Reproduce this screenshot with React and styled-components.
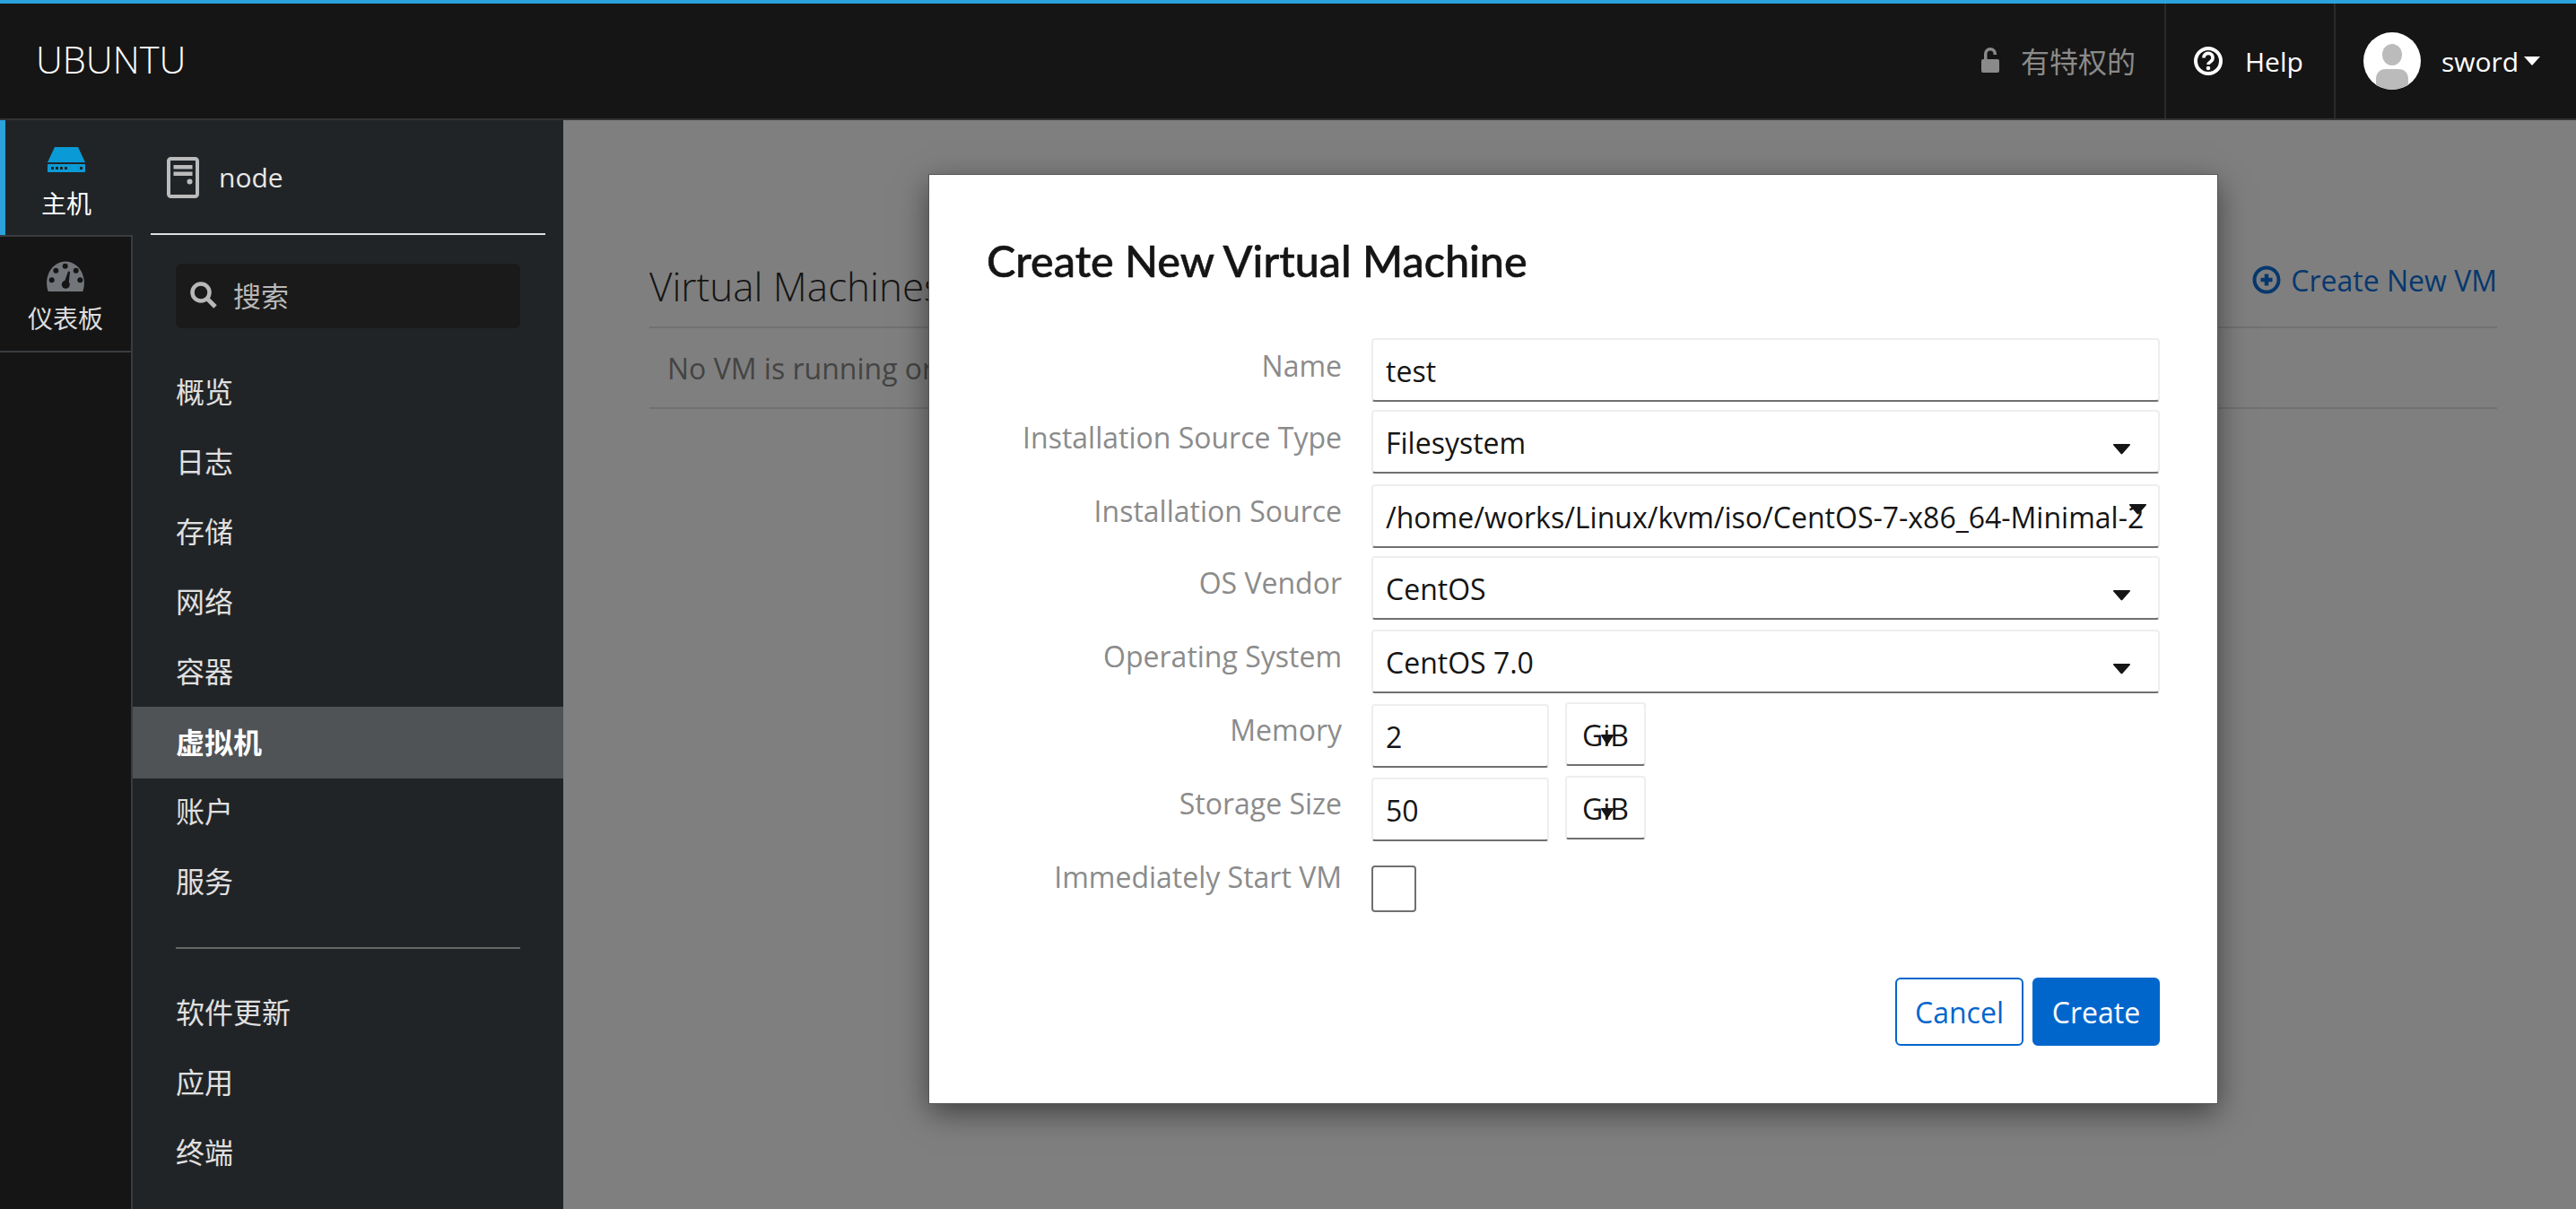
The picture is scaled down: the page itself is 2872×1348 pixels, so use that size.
import React from 'react';
import styled, { createGlobalStyle } from 'styled-components';

const Global = createGlobalStyle`
  html, body {
    margin: 0;
    padding: 0;
    background: #7f7f7f;
  }
  * {
    box-sizing: border-box;
  }
  body {
    font-family: "Open Sans", "Noto Sans CJK SC", sans-serif;
  }
`;

const Page = styled.div`
  width: 2872px;
  height: 1348px;
  overflow: hidden;
  display: flex;
  flex-direction: column;
`;

const TopBar = styled.header`
  height: 134px;
  flex: none;
  display: flex;
  align-items: stretch;
  background: #151515;
  border-top: 4px solid #2ba2dc;
  border-bottom: 2px solid #333;
`;

const Brand = styled.div`
  flex: 1;
  padding: 0 0 4px 40px;
  display: flex;
  align-items: center;
  font-size: 41.500px;
  font-weight: 300;
  color: #fff;
`;

const Privileges = styled.div`
  width: 274px;
  display: flex;
  align-items: center;
  gap: 24px;
  padding: 0 0 3px 70px;
  font-size: 32px;
  color: #8a8a8a;
`;

const BarItem = styled.div`
  width: ${(p) => p.$width}px;
  display: flex;
  align-items: center;
  padding-left: ${(p) => p.$pad}px;
  font-size: 30px;
  color: #fff;
  border-left: 2px solid #2a2a2a;
`;

const HelpLabel = styled.span`
  margin-left: 25px;
`;

const UserLabel = styled.span`
  margin-left: 23px;
`;

const UserCaret = styled.svg`
  margin-left: 6px;
  width: 18px;
  height: 10px;
  fill: #fff;
`;

const Avatar = styled.svg`
  width: 64px;
  height: 64px;
  border-radius: 50%;
  flex: none;
`;

const Main = styled.div`
  flex: 1;
  display: flex;
  min-height: 0;
`;

const Rail = styled.nav`
  width: 148px;
  flex: none;
  background: #151515;
  border-right: 2px solid #393c3f;
`;

const RailItem = styled.div`
  height: ${(p) => p.$height}px;
  width: ${(p) => (p.$active ? '148px' : 'auto')};
  position: relative;
  z-index: 1;
  display: flex;
  flex-direction: column;
  align-items: center;
  padding-top: ${(p) => p.$top}px;
  font-size: 28px;
  color: ${(p) => (p.$active ? '#fff' : '#ddd')};
  background: ${(p) => (p.$active ? '#212427' : '#151515')};
  border-left: ${(p) => (p.$active ? '6px solid #2ba2dc' : '0')};
  padding-right: ${(p) => (p.$active ? '6px' : '0')};
  border-bottom: ${(p) => (p.$active ? '0' : '2px solid #393c3f')};
  border-top: ${(p) => (p.$active ? '0' : '2px solid #393c3f')};
`;

const RailIcon = styled.svg`
  width: 42px;
  height: ${(p) => p.$height}px;
  margin-bottom: ${(p) => p.$gap}px;
  flex: none;
`;

const RailLabel = styled.span`
  line-height: 32px;
`;

const Nav = styled.aside`
  width: 480px;
  flex: none;
  background: #212427;
  display: flex;
  flex-direction: column;
`;

const NodeHeader = styled.div`
  height: 128px;
  margin: 0 20px;
  padding: 39px 0 0 18px;
  display: flex;
  align-items: flex-start;
  gap: 22px;
  border-bottom: 2px solid #ddd;
  font-size: 30px;
  color: #e8e8e8;
`;

const NodeIcon = styled.svg`
  width: 36px;
  height: 46px;
  margin-top: 2px;
  flex: none;
`;

const NodeName = styled.span`
  line-height: 44px;
  margin-top: 3px;
`;

const SearchBox = styled.div`
  margin: 32px 48px 30px;
  height: 72px;
  padding: 0 0 3px 16px;
  background: #1a1a1a;
  border-radius: 6px;
  display: flex;
  align-items: center;
  gap: 18px;
  font-size: 31px;
  color: #b8b8b8;
`;

const NavItem = styled.div`
  height: ${(p) => (p.$active ? 80 : 78)}px;
  margin: ${(p) => (p.$active ? '1.500px 0 -3.500px' : '0')};
  padding: 0 0 ${(p) => (p.$active ? 3 : 0)}px 48px;
  display: flex;
  align-items: center;
  flex: none;
  font-size: 32px;
  font-weight: ${(p) => (p.$active ? 700 : 400)};
  color: ${(p) => (p.$active ? '#fff' : '#e0e0e0')};
  background: ${(p) => (p.$active ? '#505356' : 'transparent')};
`;

const NavDivider = styled.div`
  height: 2px;
  flex: none;
  margin: 35.500px 48px 30.500px;
  background: #666;
`;

const Content = styled.main`
  flex: 1;
  position: relative;
  min-width: 0;
  background: #7f7f7f;
  padding: 0 88px 0 96px;
`;

const TitleRow = styled.div`
  margin-top: 150px;
  height: 82px;
  display: flex;
  justify-content: space-between;
  border-bottom: 2px solid #717171;
  overflow: hidden;
`;

const PageTitle = styled.h1`
  margin: 0;
  padding-top: 5px;
  font-size: 44px;
  font-weight: 300;
  line-height: 60px;
  color: #151515;
`;

const AddLink = styled.div`
  display: flex;
  align-items: center;
  gap: 11px;
  height: 52px;
  margin-top: 2px;
  font-size: 32px;
  color: #06386e;
`;

const EmptyRow = styled.div`
  height: 90px;
  padding-left: 20px;
  display: flex;
  align-items: center;
  font-size: 32px;
  color: #444;
  border-bottom: 2px solid #717171;
`;

const Modal = styled.section`
  position: absolute;
  left: 408px;
  top: 61px;
  width: 1436px;
  height: 1035px;
  padding: 67px 64px 0;
  background: #fff;
  box-shadow: 0 0 0 1px #555, 0 10px 32px rgba(0, 0, 0, 0.5);
`;

const ModalTitle = styled.h2`
  margin: 0 0 59px;
  font-family: "Lato", sans-serif;
  font-size: 48.500px;
  font-weight: 500;
  line-height: 56px;
  color: #151515;
  -webkit-text-stroke: 0.6px #151515;
`;

const FormRow = styled.div`
  height: ${(p) => p.$pitch}px;
  display: grid;
  grid-template-columns: 396px 1fr;
  column-gap: 33px;
`;

const Label = styled.label`
  text-align: right;
  font-size: 32px;
  line-height: 44px;
  padding-top: ${(p) => p.$top}px;
  color: #8b8b8b;
`;

const Field = styled.div`
  position: relative;
  width: ${(p) => p.$width || 'auto'};
  height: 71px;
  padding: 13px 14px 0;
  overflow: hidden;
  white-space: nowrap;
  font-size: 32px;
  line-height: 44px;
  color: #151515;
  background: #fff;
  border: 2px solid #eee;
  border-bottom-color: #707070;
  border-radius: 4px;
`;

const Caret = styled.svg`
  position: absolute;
  right: ${(p) => p.$right}px;
  top: ${(p) => p.$top}px;
  width: ${(p) => p.$size || 19}px;
  height: 12px;
  fill: #151515;
`;

const SizeGroup = styled.div`
  display: flex;
  gap: 18px;
  align-items: flex-start;
`;

const UnitField = styled(Field)`
  width: 90px;
  margin-top: -2px;
  padding: 13px 0 0;
  text-align: center;
`;

const CheckBox = styled.div`
  width: 50px;
  height: 52px;
  margin-top: ${(p) => p.$top}px;
  border: 2px solid #707070;
  border-radius: 4px;
`;

const Footer = styled.div`
  margin-top: 81px;
  display: flex;
  justify-content: flex-end;
  gap: 10px;
`;

const Button = styled.button`
  width: ${(p) => p.$width}px;
  height: 76px;
  padding: 0;
  font-family: inherit;
  font-size: 32px;
  border-radius: 6px;
  border: 2px solid #0066cc;
  color: ${(p) => (p.$primary ? '#fff' : '#0066cc')};
  background: ${(p) => (p.$primary ? '#0066cc' : '#fff')};
`;

const CaretPath = () => <path d="M1 0h17c.9 0 1.300 1 .7 1.600L10.300 11c-.5.5-1.200.5-1.700 0L.3 1.600C-.3 1 .1 0 1 0z" />;

const SelectCaret = ({ right = 31, top = 36 }) => (
  <Caret $right={right} $top={top} viewBox="0 0 19 12" preserveAspectRatio="none">
    <CaretPath />
  </Caret>
);

const UnitCaret = () => (
  <Caret $size={14} $right={34} $top={34} viewBox="0 0 19 12" preserveAspectRatio="none">
    <CaretPath />
  </Caret>
);

const navTop = ['概览', '日志', '存储', '网络', '容器'];
const navMiddle = ['账户', '服务'];
const navBottom = ['软件更新', '应用', '终端'];

export default function App() {
  return (
    <Page>
      <Global />
      <TopBar>
        <Brand>UBUNTU</Brand>
        <Privileges>
          <svg width="20" height="28" viewBox="0 0 20 28" fill="#8a8a8a">
            <path d="M2 13h16a2 2 0 0 1 2 2v11a2 2 0 0 1-2 2H2a2 2 0 0 1-2-2V15a2 2 0 0 1 2-2z" />
            <path d="M3 13V7a7 7 0 0 1 14 0v1h-3.500V7a3.500 3.500 0 0 0-7 0v6z" />
          </svg>
          有特权的
        </Privileges>
        <BarItem $width={189} $pad={31}>
          <svg width="32" height="32" viewBox="0 0 32 32">
            <circle cx="16" cy="16" r="14" fill="none" stroke="#fff" strokeWidth="4" />
            <path d="M11 12.500a5 5 0 1 1 7.800 4c-1.800 1.200-2.800 1.800-2.800 3.500" fill="none" stroke="#fff" strokeWidth="3.600" />
            <circle cx="16" cy="24" r="2.300" fill="#fff" />
          </svg>
          <HelpLabel>Help</HelpLabel>
        </BarItem>
        <BarItem $width={270} $pad={31}>
          <Avatar viewBox="0 0 64 64">
            <rect width="64" height="64" fill="#fff" />
            <ellipse cx="32" cy="25" rx="11" ry="12" fill="#bbb" />
            <path d="M14 64V52c0-8 6-11 11-11h14c5 0 11 3 11 11v12z" fill="#bbb" />
          </Avatar>
          <UserLabel>sword</UserLabel>
          <UserCaret viewBox="0 0 18 10">
            <path d="M0 0h18L9 10z" />
          </UserCaret>
        </BarItem>
      </TopBar>
      <Main>
        <Rail>
          <RailItem $active $height={128} $top={30}>
            <RailIcon $height={28} $gap={19} viewBox="0 0 42 28">
              <path d="M8 0h26l8 17H0z" fill="#0a9bd6" />
              <path
                fillRule="evenodd"
                fill="#0a9bd6"
                d="M1 19h40a1 1 0 0 1 1 1v7a1 1 0 0 1-1 1H1a1 1 0 0 1-1-1v-7a1 1 0 0 1 1-1zM4 22v3h3v-3zm5 0v3h3v-3zm5 0v3h3v-3zm5 0v3h3v-3zm17 0v3h3v-3z"
              />
            </RailIcon>
            <RailLabel>主机</RailLabel>
          </RailItem>
          <RailItem $height={131} $top={27}>
            <RailIcon $height={34} $gap={14} viewBox="0 0 42 34">
              <path d="M3 34C2 34 1.500 33.500 1.200 32.500C-2 21 2 9 11 3.500c6-4 14-4 20 0C40 9 44 21 40.800 32.500C40.500 33.500 40 34 39 34z" fill="#72767b" />
              <g fill="#151515">
                <circle cx="20.700" cy="5.700" r="3" />
                <circle cx="10.300" cy="10.700" r="3" />
                <circle cx="32.700" cy="10.700" r="3" />
                <circle cx="5.700" cy="21.300" r="3" />
                <circle cx="37.300" cy="21.300" r="3" />
                <circle cx="21.300" cy="26.300" r="4.500" />
                <path d="M24 11.500l2 .5-1.500 14.500-5.500-1z" />
              </g>
            </RailIcon>
            <RailLabel>仪表板</RailLabel>
          </RailItem>
        </Rail>
        <Nav>
          <NodeHeader>
            <NodeIcon viewBox="0 0 36 46">
              <rect x="2" y="2" width="32" height="42" rx="2.500" fill="none" stroke="#bbb" strokeWidth="4" />
              <rect x="7.500" y="9" width="21" height="4.500" fill="#bbb" />
              <rect x="7.500" y="16.500" width="21" height="4.500" fill="#bbb" />
              <circle cx="25.500" cy="27.500" r="3" fill="#bbb" />
            </NodeIcon>
            <NodeName>node</NodeName>
          </NodeHeader>
          <SearchBox>
            <svg width="30" height="30" viewBox="0 0 30 30" fill="none" stroke="#b8b8b8">
              <circle cx="12" cy="12" r="9.500" strokeWidth="4.500" />
              <path d="M19 19l9 9" strokeWidth="5" />
            </svg>
            搜索
          </SearchBox>
          {navTop.map((item) => (
            <NavItem key={item}>{item}</NavItem>
          ))}
          <NavItem $active>虚拟机</NavItem>
          {navMiddle.map((item) => (
            <NavItem key={item}>{item}</NavItem>
          ))}
          <NavDivider />
          {navBottom.map((item) => (
            <NavItem key={item}>{item}</NavItem>
          ))}
        </Nav>
        <Content>
          <TitleRow>
            <PageTitle>Virtual Machines</PageTitle>
            <AddLink>
              <svg width="32" height="32" viewBox="0 0 32 32">
                <circle cx="16" cy="16" r="13.500" fill="none" stroke="#06386e" strokeWidth="4" />
                <path d="M16 9.500v13M9.500 16h13" stroke="#06386e" strokeWidth="4.500" />
              </svg>
              Create New VM
            </AddLink>
          </TitleRow>
          <EmptyRow>No VM is running or defined on this host</EmptyRow>
          <Modal>
            <ModalTitle>Create New Virtual Machine</ModalTitle>
            <FormRow $pitch={80}>
              <Label $top={9}>Name</Label>
              <Field>test</Field>
            </FormRow>
            <FormRow $pitch={83}>
              <Label $top={9}>Installation Source Type</Label>
              <Field>
                Filesystem
                <SelectCaret />
              </Field>
            </FormRow>
            <FormRow $pitch={80}>
              <Label $top={8}>Installation Source</Label>
              <Field>
                /home/works/Linux/kvm/iso/CentOS-7-x86_64-Minimal-2
                <SelectCaret right={13} top={20} />
              </Field>
            </FormRow>
            <FormRow $pitch={82}>
              <Label $top={8}>OS Vendor</Label>
              <Field>
                CentOS
                <SelectCaret />
              </Field>
            </FormRow>
            <FormRow $pitch={83}>
              <Label $top={8}>Operating System</Label>
              <Field>
                CentOS 7.0
                <SelectCaret />
              </Field>
            </FormRow>
            <FormRow $pitch={82}>
              <Label $top={7}>Memory</Label>
              <SizeGroup>
                <Field $width="198px">2</Field>
                <UnitField>
                  GiB
                  <UnitCaret />
                </UnitField>
              </SizeGroup>
            </FormRow>
            <FormRow $pitch={82}>
              <Label $top={7}>Storage Size</Label>
              <SizeGroup>
                <Field $width="198px">50</Field>
                <UnitField>
                  GiB
                  <UnitCaret />
                </UnitField>
              </SizeGroup>
            </FormRow>
            <FormRow $pitch={60}>
              <Label $top={7}>Immediately Start VM</Label>
              <CheckBox $top={16} />
            </FormRow>
            <Footer>
              <Button $width={143}>Cancel</Button>
              <Button $width={142} $primary>Create</Button>
            </Footer>
          </Modal>
        </Content>
      </Main>
    </Page>
  );
}
